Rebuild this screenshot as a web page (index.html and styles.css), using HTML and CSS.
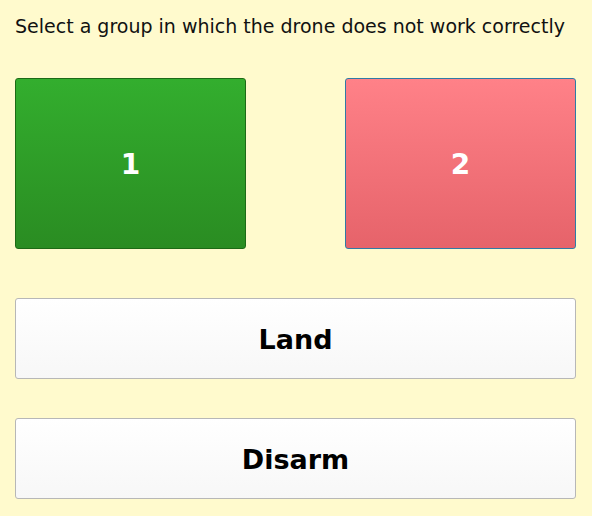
FILE: index.html
```html
<!DOCTYPE html>
<html>
<head>
<meta charset="utf-8">
<link rel="stylesheet" href="styles.css">
</head>
<body>
<div class="page">
  <p class="title">Select a group in which the drone does not work correctly</p>
  <div class="groups">
    <button class="group group-ok">1</button>
    <button class="group group-bad">2</button>
  </div>
  <button class="action">Land</button>
  <button class="action">Disarm</button>
</div>
</body>
</html>
```
FILE: styles.css
```css
html, body {
  margin: 0;
  padding: 0;
  background: #fffacd;
}
.page {
  width: 561px;
  padding: 14px 16px 0 15px;
  font-family: "DejaVu Sans", "Open Sans", sans-serif;
  display: flex;
  flex-direction: column;
}
.title {
  margin: 0;
  font-size: 19px;
  line-height: 24px;
  color: #111;
  white-space: nowrap;
}
.groups {
  margin-top: 40px;
  display: flex;
  justify-content: space-between;
}
.group {
  width: 231px;
  height: 171px;
  border-radius: 3px;
  font-family: inherit;
  font-size: 28px;
  font-weight: 700;
  color: #fff;
  padding: 2px 0 0;
  cursor: pointer;
}
.group-ok {
  border: 1px solid #1d6a16;
  background: linear-gradient(#33ae2e, #2a8c22);
}
.group-bad {
  border: 1px solid #2f7aa6;
  background: linear-gradient(#ff8188, #e6636a);
}
.action {
  height: 81px;
  width: 561px;
  border: 1px solid #b7b7b7;
  border-radius: 3px;
  background: linear-gradient(#ffffff, #f7f7f7);
  font-family: inherit;
  font-size: 27px;
  font-weight: 700;
  color: #000;
  padding: 2px 0 0;
  cursor: pointer;
}
.groups + .action {
  margin-top: 49px;
}
.action + .action {
  margin-top: 39px;
}
```
